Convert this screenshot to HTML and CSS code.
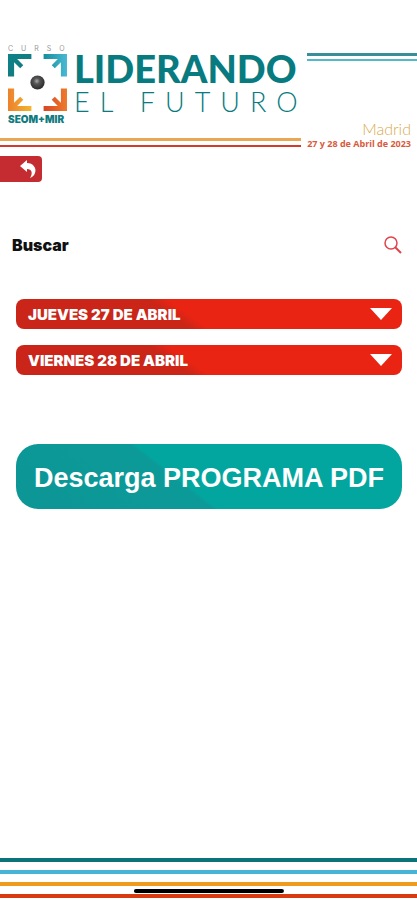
FILE: index.html
```html
<!DOCTYPE html>
<html lang="es">
<head>
<meta charset="utf-8">
<meta name="viewport" content="width=device-width, initial-scale=1">
<title>Liderando el futuro</title>
<link rel="stylesheet" href="styles.css">
</head>
<body>
<header class="header">
  <div class="brand">
    <span class="brand-top">CURSO</span>
    <svg class="brand-mark" viewBox="0 0 58 58" aria-hidden="true">
      <defs>
        <linearGradient id="teal" x2="1" y2="1"><stop stop-color="#0c8388"/><stop offset="1" stop-color="#16777e"/></linearGradient>
        <linearGradient id="blue" x2="1"><stop stop-color="#168e9d"/><stop offset="1" stop-color="#49b9d4"/></linearGradient>
        <linearGradient id="gold" x2="1"><stop stop-color="#ee802d"/><stop offset="1" stop-color="#f1b62e"/></linearGradient>
        <linearGradient id="rust" x2="1"><stop stop-color="#d84524"/><stop offset="1" stop-color="#ee7b2b"/></linearGradient>
        <radialGradient id="ball" cx=".45" cy=".4" r=".6"><stop stop-color="#aaa"/><stop offset=".35" stop-color="#555"/><stop offset="1" stop-color="#292929"/></radialGradient>
      </defs>
      <path fill="url(#teal)" d="M0 1H23V6H9L15 12L12 15L6 9V23H0Z"/>
      <path fill="url(#blue)" d="M58 1H35V6H49L43 12L46 15L52 9V23H58Z"/>
      <path fill="url(#gold)" d="M0 57H23V52H9L15 46L12 43L6 49V35H0Z"/>
      <path fill="url(#rust)" d="M58 57H35V52H49L43 46L46 43L52 49V35H58Z"/>
      <circle cx="29" cy="29" r="7" fill="url(#ball)"/>
    </svg>
    <span class="brand-bottom">SEOM+MIR</span>
  </div>
  <h1 class="title"><span class="title-main">LIDERANDO</span><span class="title-sub">EL FUTURO</span></h1>
  <div class="top-lines"></div>
  <div class="low-lines"></div>
  <p class="event"><span class="city">Madrid</span><span class="dates">27 y 28 de Abril de 2023</span></p>
</header>
<main class="main">
  <button class="back" type="button" aria-label="Volver">
    <svg viewBox="0 0 18 18" width="18" height="18" aria-hidden="true"><path fill="#fff" d="M1 6L8 0V3C14 3 18 8 16 13C15 16 13 17 11 18C14 13 13 9 8 9V12Z"/></svg>
  </button>
  <form class="search">
    <input class="search-input" type="search" placeholder="Buscar" aria-label="Buscar">
    <button class="search-button" type="button" aria-label="Iniciar búsqueda">
      <svg viewBox="0 0 18 18" width="18" height="18" fill="none" stroke="#e2434a" aria-hidden="true"><circle cx="7" cy="7" r="6" stroke-width="1.5"/><path stroke-width="2" d="M11 11L17 17"/></svg>
    </button>
  </form>
  <div class="days">
    <button class="day" type="button">JUEVES 27 DE ABRIL<svg viewBox="0 0 22 12" width="22" height="12" aria-hidden="true"><path fill="#fff" d="M0 0H22L11 12Z"/></svg></button>
    <button class="day" type="button">VIERNES 28 DE ABRIL<svg viewBox="0 0 22 12" width="22" height="12" aria-hidden="true"><path fill="#fff" d="M0 0H22L11 12Z"/></svg></button>
  </div>
  <a class="download" href="#">Descarga PROGRAMA PDF</a>
</main>
<footer class="footer">
  <div class="stripe teal"></div>
  <div class="stripe blue"></div>
  <div class="stripe orange"></div>
  <div class="stripe red"></div>
  <div class="home-bar"></div>
</footer>
</body>
</html>
```
FILE: styles.css
```css
* { box-sizing: border-box; }
body {
  margin: 0;
  min-height: 100vh;
  display: flex;
  flex-direction: column;
  background: #fff;
  font-family: Inter, "Liberation Sans", sans-serif;
}
button { border: 0; padding: 0; background: none; font: inherit; cursor: pointer; }
svg { display: block; flex: none; }

.header {
  display: grid;
  grid-template-columns: 67px 234px 1fr;
  grid-template-rows: 80px 25px;
  padding-top: 44px;
}
.brand {
  display: flex;
  flex-direction: column;
  padding-left: 8px;
  color: #107b80;
}
.brand-top {
  display: flex;
  font-size: 7px;
  line-height: 9px;
  letter-spacing: 8px;
  color: #999;
}
.brand-mark { width: 59px; height: 59px; }
.brand-bottom { font: 900 10px/14px Inter, sans-serif; white-space: nowrap; }
.title {
  display: flex;
  flex-direction: column;
  margin: 0;
  padding: 4px 0 0 7px;
  color: #087b80;
  font-family: Lato, sans-serif;
  white-space: nowrap;
}
.title-main { font-size: 38px; line-height: 40px; font-weight: 900; }
.title-sub { font-size: 27px; line-height: 28px; font-weight: 300; letter-spacing: 10px; }
.top-lines {
  height: 8px;
  margin: 9px 0 0 6px;
  border-top: 3px solid #388f98;
  border-bottom: 2px solid #52b8cc;
}
.low-lines {
  grid-column: 1 / 3;
  height: 9px;
  margin-top: 14px;
  border-top: 3px solid #eaa652;
  border-bottom: 2px solid #d13a2c;
}
.event {
  align-self: end;
  display: flex;
  flex-direction: column;
  align-items: flex-end;
  margin: 0;
  padding-right: 6px;
  white-space: nowrap;
}
.city { font: 300 16px/18px Lato, sans-serif; color: #d9aa4c; }
.dates { font: 700 9px/11px "Open Sans", sans-serif; color: #d85a3e; }

.main { display: flex; flex-direction: column; }
.back {
  width: 42px;
  height: 26px;
  margin-top: 7px;
  padding-right: 5px;
  display: flex;
  align-items: center;
  justify-content: flex-end;
  background: #c42c32;
  border-radius: 0 4px 4px 0;
}
.search {
  display: flex;
  align-items: center;
  margin-top: 50px;
  padding: 0 15px 0 12px;
  height: 26px;
}
.search-input {
  flex: 1;
  min-width: 0;
  border: 0;
  padding: 0;
  outline: 0;
  background: none;
  color: #111;
  font: 900 16px/24px Inter, sans-serif;
}
.search-input::placeholder { color: #111; opacity: 1; }
.days {
  display: flex;
  flex-direction: column;
  gap: 16px;
  margin: 41px 15px 0 16px;
}
.day {
  display: flex;
  align-items: center;
  justify-content: space-between;
  height: 30px;
  padding: 0 10px 0 12px;
  border-radius: 8px;
  background: linear-gradient(35deg, #c92518 0, #cb2518 41%, #e92413 45%);
  color: #fff;
  font-size: 15px;
  font-weight: 900;
}
.download {
  display: flex;
  align-items: center;
  justify-content: center;
  height: 65px;
  margin: 69px 15px 0 16px;
  padding-top: 2px;
  border-radius: 22px;
  background: linear-gradient(38deg, #0c9695 0, #0c9a99 42%, #02a69f 43%);
  color: #fff;
  font: 700 27px/32px "Liberation Sans", sans-serif;
  text-decoration: none;
}

.footer {
  position: relative;
  display: flex;
  flex-direction: column;
  gap: 8px;
  margin-top: auto;
  padding-bottom: 2px;
}
.stripe { height: 4px; }
.teal { background: #0a7478; }
.blue { background: #48b2d9; }
.orange { background: #ef9b1d; }
.red { background: #d93a10; }
.home-bar {
  position: absolute;
  bottom: 7px;
  left: 50%;
  width: 36%;
  height: 4px;
  border-radius: 2px;
  background: #000;
  transform: translateX(-50%);
}
```
